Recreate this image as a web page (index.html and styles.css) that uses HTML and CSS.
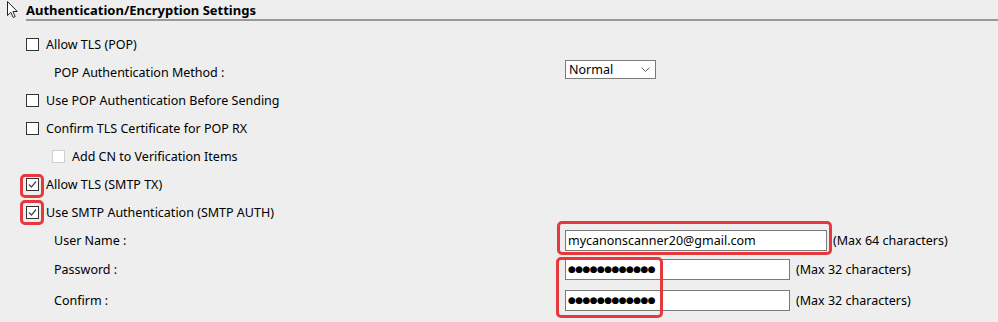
FILE: index.html
```html
<!DOCTYPE html>
<html>
<head>
<meta charset="utf-8">
<link rel="stylesheet" href="styles.css">
</head>
<body>
<div class="page">
  <svg class="cursor" width="13" height="19" viewBox="0 0 13 19"><path d="M1.5 1.5 L1.5 15.5 L4.8 12.3 L7.2 17.5 L9.2 16.6 L6.9 11.5 L11.3 11.5 Z" fill="#fff" stroke="#222" stroke-width="1" stroke-linejoin="miter"/></svg>
  <div class="section-title">Authentication/Encryption Settings</div>
  <div class="rows">
    <div class="row"><span class="box"></span><span>Allow TLS (POP)</span></div>
    <div class="row field">
      <span class="label">POP Authentication Method :</span>
      <div class="select"><span>Normal</span><svg width="9" height="5" viewBox="0 0 9 5"><path d="M0.5 0.5 L4.5 4.5 L8.5 0.5" fill="none" stroke="#666" stroke-width="1"/></svg></div>
    </div>
    <div class="row"><span class="box"></span><span>Use POP Authentication Before Sending</span></div>
    <div class="row"><span class="box"></span><span>Confirm TLS Certificate for POP RX</span></div>
    <div class="row sub"><span class="box disabled"></span><span>Add CN to Verification Items</span></div>
    <div class="row"><span class="box checked"><svg width="11" height="11" viewBox="0 0 11 11"><path d="M2 5.5 L4.5 8 L9 2.5" fill="none" stroke="#444" stroke-width="1.2"/></svg></span><span>Allow TLS (SMTP TX)</span></div>
    <div class="row"><span class="box checked"><svg width="11" height="11" viewBox="0 0 11 11"><path d="M2 5.5 L4.5 8 L9 2.5" fill="none" stroke="#444" stroke-width="1.2"/></svg></span><span>Use SMTP Authentication (SMTP AUTH)</span></div>
    <div class="row field">
      <span class="label">User Name :</span>
      <div class="input wide">mycanonscanner20@gmail.com</div>
      <span class="hint">(Max 64 characters)</span>
    </div>
    <div class="row field tall">
      <span class="label">Password :</span>
      <div class="input"><span class="dots">●●●●●●●●●●●●</span></div>
      <span class="hint">(Max 32 characters)</span>
    </div>
    <div class="row field tall">
      <span class="label">Confirm :</span>
      <div class="input"><span class="dots">●●●●●●●●●●●●</span></div>
      <span class="hint">(Max 32 characters)</span>
    </div>
  </div>
  <div class="mark mark-tls"></div>
  <div class="mark mark-auth"></div>
  <div class="mark mark-user"></div>
  <div class="mark mark-pass"></div>
</div>
</body>
</html>
```

FILE: styles.css
```css
html, body {
  margin: 0;
  padding: 0;
  background: #eeeeee;
}
.page {
  position: relative;
  width: 998px;
  height: 322px;
  overflow: hidden;
  font-family: "Noto Sans", "Open Sans", sans-serif;
  font-size: 12.5px;
  color: #000;
}
.cursor {
  position: absolute;
  left: 6px;
  top: 0px;
}
.section-title {
  margin-left: 26px;
  padding-top: 2px;
  height: 17px;
  line-height: 17px;
  font-weight: bold;
  font-size: 13px;
  border-bottom: 2px solid #999;
}
.rows {
  display: flex;
  flex-direction: column;
  padding-left: 26px;
  padding-top: 9px;
}
.row {
  display: flex;
  align-items: center;
  height: 28px;
  gap: 7px;
}
.row.sub {
  padding-left: 26px;
}
.row.field {
  gap: 0;
  padding-left: 28px;
}
.row.tall {
  height: 31px;
}
.box {
  width: 11px;
  height: 11px;
  border: 1px solid #333;
  background: #fff;
  display: flex;
  align-items: center;
  justify-content: center;
  flex: none;
}
.box.disabled {
  border-color: #cfcfcf;
}
.label {
  width: 511px;
  flex: none;
}
.select {
  border: 1px solid #7a7a7a;
  background: #fff;
  display: flex;
  align-items: center;
  justify-content: space-between;
  padding: 0 5px 0 3px;
  box-sizing: border-box;
  width: 91px;
  height: 19px;
  margin-top: -6px;
}
.input {
  width: 225px;
  height: 21px;
  box-sizing: border-box;
  border: 1px solid #7a7a7a;
  background: #fff;
  display: flex;
  align-items: center;
  padding-left: 2px;
  flex: none;
}
.input.wide {
  width: 262px;
}
.hint {
  margin-left: 6px;
}
.dots {
  font-family: "DejaVu Sans", sans-serif;
  font-size: 9px;
  letter-spacing: -0.6px;
  line-height: 1;
}
.mark {
  position: absolute;
  border: 3px solid #e6393e;
  border-radius: 5px;
  box-sizing: border-box;
}
.mark-tls {
  left: 20px;
  top: 174px;
  width: 24px;
  height: 24px;
}
.mark-auth {
  left: 20px;
  top: 200px;
  width: 24px;
  height: 25px;
}
.mark-user {
  left: 557px;
  top: 221px;
  width: 275px;
  height: 34px;
}
.mark-pass {
  left: 556px;
  top: 257px;
  width: 107px;
  height: 61px;
}
```
